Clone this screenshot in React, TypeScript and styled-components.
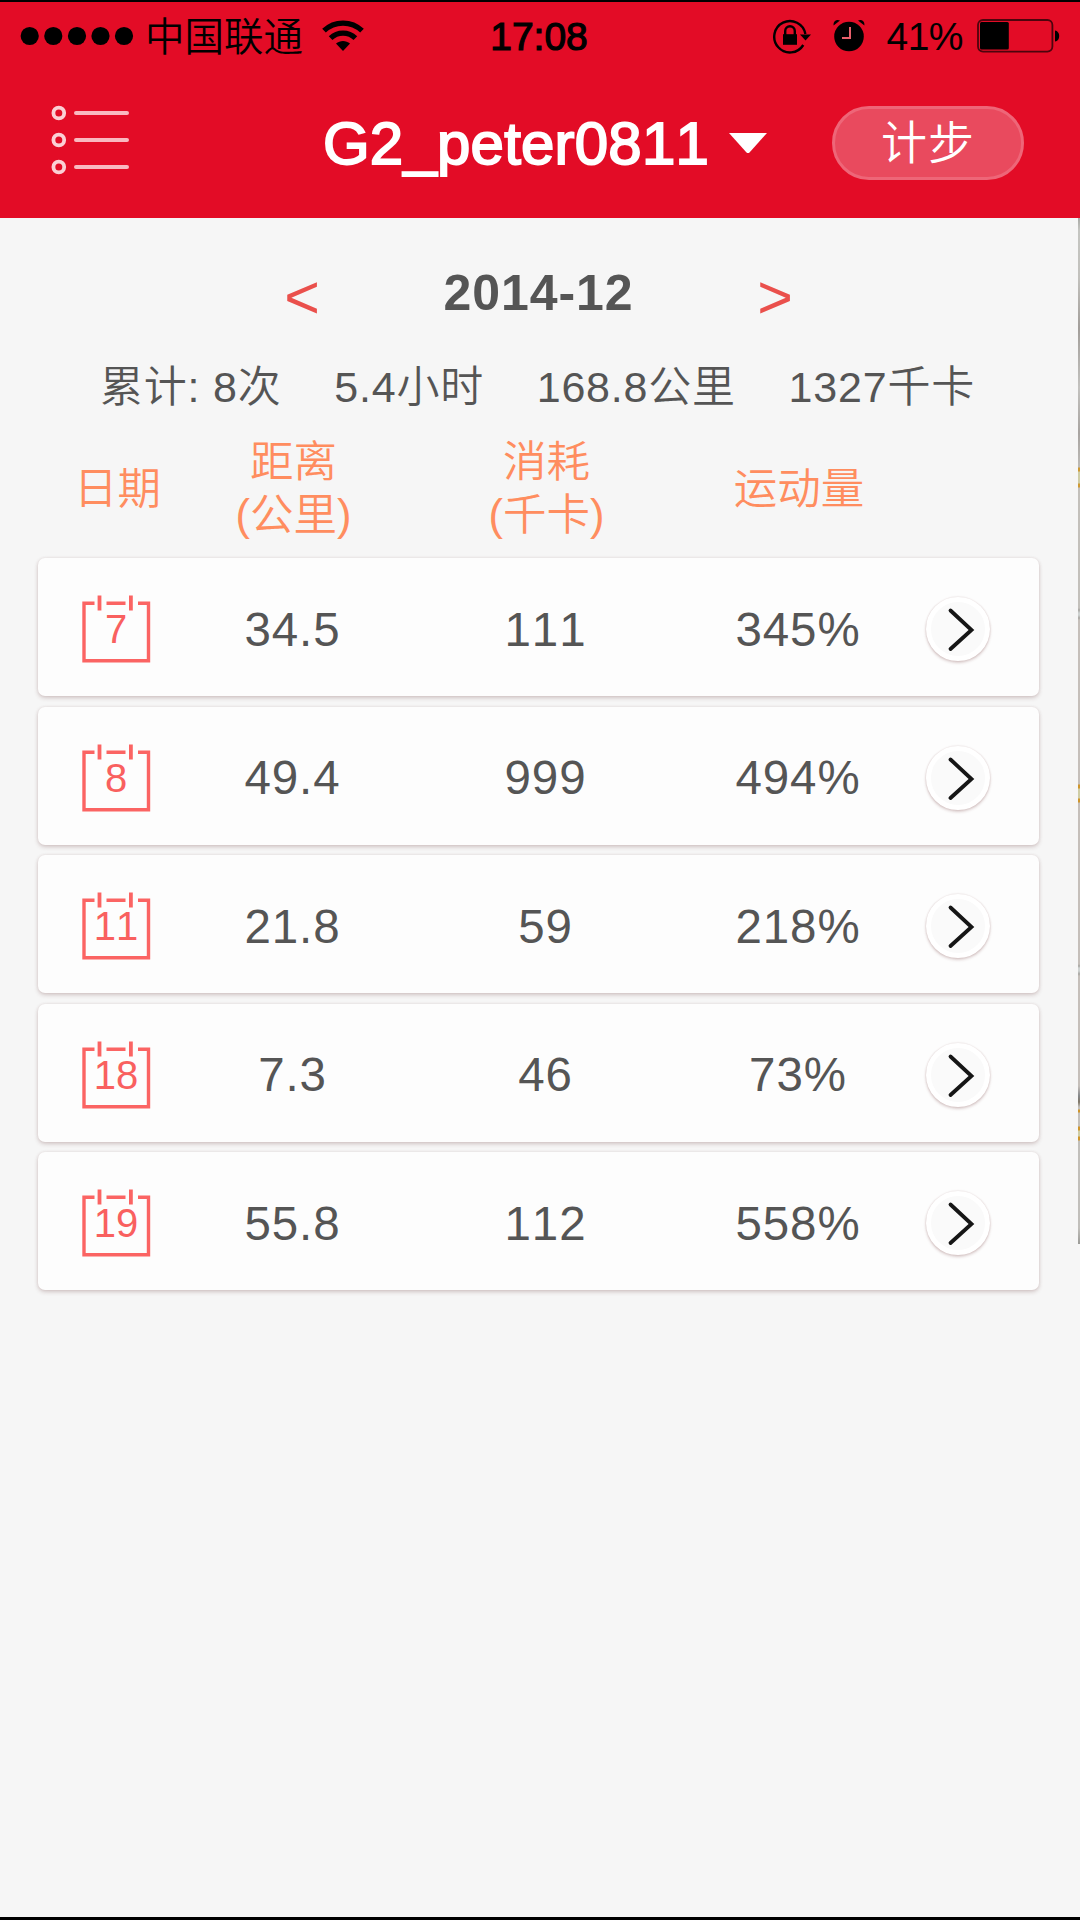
import React from "react";
import styled, { createGlobalStyle } from "styled-components";

const RED = "#e30c26";
const LATIN = '"Liberation Sans", "Noto Sans CJK SC", sans-serif';

const GlobalStyle = createGlobalStyle`
  * { box-sizing: border-box; }
  body {
    margin: 0;
    background: #f5f5f5;
    font-family: ${LATIN};
    font-weight: 350;
    font-kerning: none;
  }
`;

const Screen = styled.div`
  width: 1080px;
  height: 1920px;
  display: flex;
  flex-direction: column;
  overflow: hidden;
  background: #f6f6f6;
  border-top: 2px solid #000;
  border-bottom: 3px solid #000;
`;

const Header = styled.header`
  height: 216px;
  flex: none;
  background: ${RED};
  display: flex;
  flex-direction: column;
`;

const StatusBar = styled.div`
  height: 68px;
  display: grid;
  grid-template-columns: 400px 278px 402px;
  align-items: center;
  color: #000;
`;

const StatusSide = styled.div<{ $end?: boolean }>`
  display: flex;
  align-items: center;
  height: 68px;
  justify-content: ${(p) => (p.$end ? "flex-end" : "flex-start")};
  padding: ${(p) => (p.$end ? "0 20px 0 0" : "0 0 0 20px")};
`;

const Carrier = styled.span`
  font-size: 39.5px;
  line-height: 48px;
  margin: 2px 19px 0 11px;
`;

const Clock = styled.span`
  font-size: 39px;
  line-height: 44px;
  font-weight: 400;
  text-align: center;
  margin-top: 1px;
  -webkit-text-stroke: 1.2px #000;
`;

const AlarmWrap = styled.span`
  display: flex;
  margin: 0 0 2px 22px;
`;

const Percent = styled.span`
  font-size: 39px;
  line-height: 44px;
  font-weight: 400;
  letter-spacing: -0.5px;
  margin: 1px 14px 0 21px;
`;

const NavBar = styled.nav`
  flex: 1;
  display: flex;
  align-items: center;
  padding: 0 56px 8px 50px;
`;

const TitleGroup = styled.div`
  flex: 1;
  display: flex;
  align-items: center;
  padding: 6px 0 0 194px;
  gap: 20px;
`;

const Title = styled.h1`
  margin: 2px 0 0;
  font-size: 60px;
  line-height: 70px;
  font-weight: 400;
  color: #fff;
  letter-spacing: 0.2px;
  -webkit-text-stroke: 1.9px #fff;
`;

const StepButton = styled.button`
  width: 192px;
  height: 74px;
  margin-top: 5px;
  padding: 0 0 2px;
  border-radius: 37px;
  border: 3px solid #ee6678;
  background: #e94a5e;
  color: #fff;
  font: 350 46px/68px ${LATIN};
  letter-spacing: 1px;
`;

const Body = styled.div`
  flex: 1;
  display: flex;
  min-height: 0;
`;

const Main = styled.main`
  flex: 1;
  padding: 0 39px 0 38px;
`;

const EdgeStrip = styled.div`
  width: 2px;
  height: 1026px;
  background: linear-gradient(
    #a9aaa6 0,
    #c4c5c1 12px,
    #c2c1bd 60px,
    #a29e9a 110px,
    #c3c2bf 170px,
    #a8a4a1 215px,
    #bdbbb7 249px,
    #cf9a33 250px 253px,
    #cfcda6 254px 265px,
    #d09a33 266px 269px,
    #c3c0bb 270px 390px,
    #a9a7a3 392px,
    #cfd3d2 395px 397px,
    #a9a7a3 400px,
    #c5bfba 402px 566px,
    #d0962b 567px 570px,
    #cfcda6 571px 580px,
    #d0962b 581px 584px,
    #c5bfba 585px 746px,
    #a9a7a3 748px,
    #cfd3d2 750px 753px,
    #a9a7a3 756px,
    #c5bfba 758px 868px,
    #85878a 878px,
    #807768 884px,
    #c3c0bb 889px,
    #c3c0bb 891px,
    #d0962b 892px 894px,
    #c3c0bb 895px 908px,
    #d0962b 909px 912px,
    #cfcda6 913px 918px,
    #d0962b 919px 922px,
    #c1bfbb 923px 1010px,
    #9b9b97 1026px
  );
`;

const MonthPicker = styled.div`
  display: flex;
  align-items: center;
  justify-content: center;
  height: 132px;
  padding: 28px 0 0 0;
`;

const MonthArrow = styled.button`
  border: 0;
  padding: 0;
  background: none;
  color: #ea504c;
  width: 40px;
  height: 70px;
  margin-top: -3px;
  font: 400 61px/70px ${LATIN};
`;

const Month = styled.h2`
  margin: 0;
  width: 433px;
  text-align: center;
  color: #555;
  font-size: 50px;
  line-height: 60px;
  font-weight: 700;
  letter-spacing: 0.9px;
  margin-top: -11px;
`;

const Summary = styled.div`
  display: flex;
  justify-content: space-between;
  height: 76px;
  padding: 7px 64px 0 62px;
  color: #555;
  font-size: 43px;
  line-height: 60px;
  letter-spacing: 0.8px;
`;

const columns = "128px 253px 253px 252px 67px";

const TableHead = styled.div`
  display: grid;
  grid-template-columns: ${columns};
  align-items: center;
  height: 132px;
  padding-bottom: 6px;
  color: #ff8d5f;
  font-size: 43.5px;
  line-height: 53px;
  text-align: center;
  white-space: pre-line;
`;

const HeadCell = styled.div`
  padding-left: 2px;
`;

const DateHead = styled.div`
  text-align: left;
  padding-left: 36px;
`;

const Cards = styled.div`
  display: flex;
  flex-direction: column;
  gap: 10.5px;
`;

const Card = styled.div`
  display: grid;
  grid-template-columns: ${columns};
  align-items: center;
  height: 138px;
  border-radius: 7px;
  background: #fdfdfd;
  box-shadow: 0 2px 4px rgba(90, 40, 40, 0.22), 0 0 3px rgba(120, 70, 70, 0.12);
`;

const DateBadge = styled.div`
  display: grid;
  margin: 4px 0 0 44px;
  width: 69px;
  height: 68px;
  > * { grid-area: 1 / 1; }
`;

const Day = styled.span`
  color: #f9605f;
  font-size: 40px;
  line-height: 44px;
  font-weight: 400;
  text-align: center;
  margin-top: 12px;
  padding-right: 1px;
`;

const Value = styled.div`
  text-align: center;
  color: #555;
  font-size: 47.5px;
  line-height: 56px;
  font-weight: 400;
  letter-spacing: 0.9px;
  padding-top: 5px;
`;

const MoreButton = styled.button`
  width: 64px;
  height: 64px;
  margin: 4px auto 0;
  padding: 0;
  border: 5px solid #fff;
  border-radius: 50%;
  background: #fafafa;
  box-shadow: 0 2px 3px rgba(110, 50, 50, 0.24), 0 0 2px rgba(120, 60, 60, 0.22);
  display: grid;
  place-items: center;
`;

const SignalDots = () => (
  <svg width="114" height="20" viewBox="0 0 114 20">
    {[9.7, 33.3, 57, 80.5, 104].map((x) => (
      <circle key={x} cx={x} cy="10" r="9.1" />
    ))}
  </svg>
);

const WifiIcon = () => (
  <svg width="42" height="32" viewBox="0 0 42 32" fill="none" stroke="#000" strokeWidth="5.2">
    <path d="M2 10.7C12.5 0.5 29.5 0.5 40 10.7" />
    <path d="M8.6 18.2C15.5 11.4 26.5 11.4 33.4 18.2" />
    <path d="M14 23.6C18 20 24 20 28 23.6L21 31Z" fill="#000" stroke="none" />
  </svg>
);

const LockIcon = () => (
  <svg width="38" height="36" viewBox="0 0 38 36" fill="none" stroke="#000" strokeWidth="2.4">
    <path d="M30.3 27A15.7 15.7 0 1 1 32.4 16" />
    <path d="M27 16.6H38L32.5 22.4Z" fill="#000" stroke="none" />
    <rect x="10" y="16.2" width="14" height="10.6" fill="#000" stroke="none" />
    <path d="M12.2 17V13A4.8 4.8 0 0 1 21.8 13V17" />
  </svg>
);

const AlarmIcon = () => (
  <svg width="32" height="34" viewBox="0 0 32 34">
    <circle cx="16" cy="18.5" r="14.8" />
    <path d="M0.6 7.6C0 3 3.6 0.8 7 2.4ZM31.4 7.6C32 3 28.4 0.8 25 2.4Z" />
    <path d="M17 9V20H9" fill="none" stroke="#e9606b" strokeWidth="2" />
  </svg>
);

const BatteryIcon = () => (
  <svg width="83" height="34" viewBox="0 0 83 34">
    <rect x="1" y="1" width="74.4" height="31.6" rx="5" fill="none" stroke="#4d040d" strokeWidth="1.8" />
    <rect x="3" y="3" width="28.8" height="27.6" rx="1.5" />
    <path d="M78 11.4C83.6 12 83.6 21.8 78 22.6Z" />
  </svg>
);

const MenuIcon = () => (
  <svg width="79" height="70" viewBox="0 0 79 70" fill="none">
    {[8, 35, 62].map((y) => (
      <g key={y}>
        <circle cx="8.8" cy={y} r="5.4" stroke="#fbd0d5" strokeWidth="3.8" />
        <path d={`M26 ${y}H77`} stroke="#f9b9c0" strokeWidth="4" strokeLinecap="round" />
      </g>
    ))}
  </svg>
);

const CaretIcon = () => (
  <svg width="38" height="20" viewBox="0 0 38 20" fill="#fff">
    <path d="M0 0H38L20.5 19.4Q19 20.6 17.5 19.4Z" />
  </svg>
);

const CalendarIcon = () => (
  <svg width="69" height="68" viewBox="0 0 69 68" fill="none" stroke="#fb6463" strokeWidth="3.4">
    <path d="M12.5 8.3H2V65.7H66.5V8.3H56M24.5 8.3H43.5" />
    <path d="M17.5 0.5V15.5M48.9 0.5V15.5" strokeWidth="3.8" />
  </svg>
);

const ChevronIcon = () => (
  <svg width="54" height="54" viewBox="0 0 54 54" fill="none" stroke="#161616" strokeWidth="3.8" strokeLinecap="round">
    <path d="M19.5 8.5L40.5 28L19.5 47" />
  </svg>
);

const totals = ["累计: 8次", "5.4小时", "168.8公里", "1327千卡"];

const records = [
  { day: 7, distance: "34.5", energy: "111", amount: "345%" },
  { day: 8, distance: "49.4", energy: "999", amount: "494%" },
  { day: 11, distance: "21.8", energy: "59", amount: "218%" },
  { day: 18, distance: "7.3", energy: "46", amount: "73%" },
  { day: 19, distance: "55.8", energy: "112", amount: "558%" },
];

export default function App() {
  return (
    <>
      <GlobalStyle />
      <Screen>
        <Header>
          <StatusBar>
            <StatusSide>
              <SignalDots />
              <Carrier>中国联通</Carrier>
              <WifiIcon />
            </StatusSide>
            <Clock>17:08</Clock>
            <StatusSide $end>
              <LockIcon />
              <AlarmWrap>
                <AlarmIcon />
              </AlarmWrap>
              <Percent>41%</Percent>
              <BatteryIcon />
            </StatusSide>
          </StatusBar>
          <NavBar>
            <MenuIcon />
            <TitleGroup>
              <Title>G2_peter0811</Title>
              <CaretIcon />
            </TitleGroup>
            <StepButton>计步</StepButton>
          </NavBar>
        </Header>
        <Body>
          <Main>
            <MonthPicker>
              <MonthArrow>&lt;</MonthArrow>
              <Month>2014-12</Month>
              <MonthArrow>&gt;</MonthArrow>
            </MonthPicker>
            <Summary>
              {totals.map((t) => (
                <span key={t}>{t}</span>
              ))}
            </Summary>
            <TableHead>
              <DateHead>日期</DateHead>
              <HeadCell>{"距离\n(公里)"}</HeadCell>
              <HeadCell>{"消耗\n(千卡)"}</HeadCell>
              <HeadCell>运动量</HeadCell>
            </TableHead>
            <Cards>
              {records.map((r) => (
                <Card key={r.day}>
                  <DateBadge>
                    <CalendarIcon />
                    <Day>{r.day}</Day>
                  </DateBadge>
                  <Value>{r.distance}</Value>
                  <Value>{r.energy}</Value>
                  <Value>{r.amount}</Value>
                  <MoreButton>
                    <ChevronIcon />
                  </MoreButton>
                </Card>
              ))}
            </Cards>
          </Main>
          <EdgeStrip />
        </Body>
      </Screen>
    </>
  );
}
